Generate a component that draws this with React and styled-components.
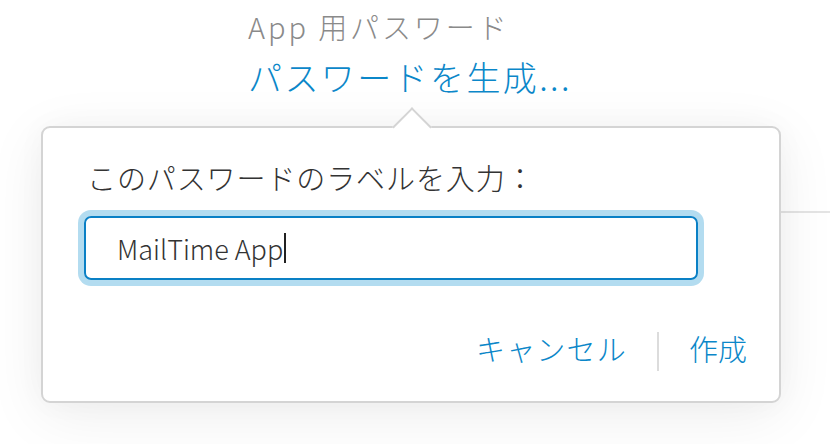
import styled, { createGlobalStyle } from "styled-components";

const GlobalStyle = createGlobalStyle`
  html, body {
    margin: 0;
    padding: 0;
    background: #ffffff;
  }

  body {
    font-family: "Noto Sans CJK JP", "Noto Sans", sans-serif;
    -webkit-font-smoothing: antialiased;
  }
`;

const Page = styled.div`
  position: relative;
  width: 830px;
  height: 444px;
  overflow: hidden;
  background: #ffffff;
`;

const Header = styled.div`
  display: flex;
  flex-direction: column;
  align-items: flex-start;
  padding: 6px 0 0 248px;
`;

const SectionTitle = styled.div`
  font-size: 29px;
  font-weight: 300;
  line-height: 40px;
  color: #8a8a8a;
  letter-spacing: 2.9px;
`;

const GenerateLink = styled.a`
  margin-top: 9px;
  font-size: 34px;
  font-weight: 300;
  line-height: 44px;
  color: #0b87c9;
  letter-spacing: 2.4px;
  text-decoration: none;
  cursor: pointer;
`;

const Separator = styled.div`
  margin: 112px 0 0 248px;
  height: 2px;
  background: #e4e4e4;
`;

const Popover = styled.div`
  position: absolute;
  left: 41px;
  top: 126px;
  width: 740px;
  height: 277px;
  box-sizing: border-box;
  display: flex;
  flex-direction: column;
  align-items: flex-start;
  padding: 32px 32px 0 41px;
  background: #ffffff;
  border: 2px solid #d4d4d4;
  border-radius: 9px;
  box-shadow: 0 12px 60px rgba(0, 0, 0, 0.07), 0 0 30px rgba(0, 0, 0, 0.03);

  &::before {
    content: "";
    position: absolute;
    top: -15px;
    left: 355px;
    width: 28px;
    height: 28px;
    box-sizing: border-box;
    background: #ffffff;
    border-top: 2px solid #d4d4d4;
    border-left: 2px solid #d4d4d4;
    transform: rotate(45deg);
  }
`;

const Label = styled.label`
  position: relative;
  padding-left: 3px;
  font-size: 29px;
  font-weight: 300;
  line-height: 35px;
  letter-spacing: 0.9px;
  color: #333333;
`;

const Field = styled.div`
  margin-top: 21px;
  width: 614px;
  height: 64px;
  box-sizing: border-box;
  display: flex;
  align-items: center;
  padding-left: 31px;
  border: 2px solid #0a80c5;
  border-radius: 7px;
  box-shadow: 0 0 0 6px #b3dcf0;
  font-size: 27px;
  font-weight: 300;
  color: #333333;
`;

const Caret = styled.span`
  display: inline-block;
  width: 2px;
  height: 30px;
  margin-left: 1px;
  background: #222222;
`;

const Actions = styled.div`
  align-self: stretch;
  display: flex;
  justify-content: flex-end;
  align-items: center;
  gap: 30px;
  margin-top: 48px;
`;

const ActionButton = styled.button`
  padding: 0 0 6px;
  border: none;
  background: none;
  font-family: inherit;
  font-size: 29px;
  font-weight: 300;
  line-height: 40px;
  letter-spacing: ${(p) => p.$spacing || 0}px;
  color: #0b87c9;
  cursor: pointer;
`;

const ActionDivider = styled.span`
  width: 2px;
  height: 39px;
  background: #dcdcdc;
`;

export default function App() {
  return (
    <>
      <GlobalStyle />
      <Page>
        <Header>
          <SectionTitle>App 用パスワード</SectionTitle>
          <GenerateLink>パスワードを生成...</GenerateLink>
        </Header>
        <Separator />
        <Popover>
          <Label>このパスワードのラベルを入力：</Label>
          <Field>
            MailTime App
            <Caret />
          </Field>
          <Actions>
            <ActionButton $spacing={1.2}>キャンセル</ActionButton>
            <ActionDivider />
            <ActionButton>作成</ActionButton>
          </Actions>
        </Popover>
      </Page>
    </>
  );
}
